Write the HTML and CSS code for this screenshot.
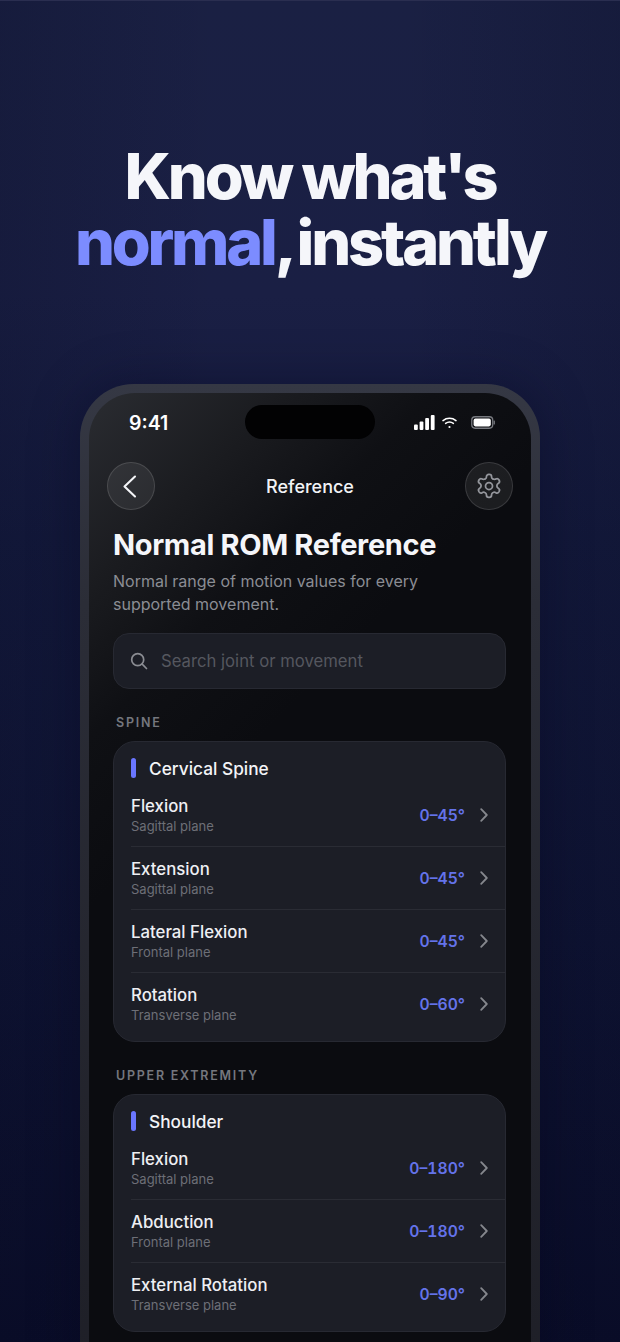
FILE: index.html
```html
<!DOCTYPE html>
<html>
<head>
  <title>Normal ROM Reference</title>
  <meta name="viewport" content="width=device-width, initial-scale=1">
  <link rel="stylesheet" href="styles.css">
</head>
<body>
  <h1 class="headline">Know what's<br><span class="accent">normal</span><span class="tight">, instantly</span></h1>

  <div class="phone">
    <div class="screen">
      <div class="status-bar">
        <span class="clock">9:41</span>
        <div class="island"></div>
        <div class="status-icons">
          <svg width="21" height="15" viewBox="0 0 21 15" fill="#fff">
            <rect x="0" y="9.500" width="3.800" height="5.500" rx="1"/>
            <rect x="5.600" y="6.500" width="3.800" height="8.500" rx="1"/>
            <rect x="11.200" y="3" width="3.800" height="12" rx="1"/>
            <rect x="16.800" y="0" width="3.800" height="15" rx="1"/>
          </svg>
          <svg class="wifi" width="15" height="12" viewBox="0 0 15 12" fill="none" stroke="#fff" stroke-width="1.500" stroke-linecap="round">
            <path d="M1 3.600C4.800.6 10.200.6 14 3.600"/>
            <path d="M3.600 6.400c2.300-1.700 5.500-1.700 7.800 0"/>
            <circle cx="7.500" cy="10" r="1.100" fill="#fff" stroke="none"/>
          </svg>
          <svg class="battery" width="24" height="13" viewBox="0 0 24 13">
            <rect x=".75" y=".75" width="21" height="11.500" rx="3.400" fill="none" stroke="#77797f" stroke-width="1.300"/>
            <rect x="2.600" y="2.600" width="17.200" height="7.800" rx="1.800" fill="#fff"/>
            <rect x="22.600" y="4.400" width="1.300" height="4.200" rx=".6" fill="#77797f"/>
          </svg>
        </div>
      </div>

      <div class="nav-bar">
        <button class="round-btn">
          <svg width="24" height="24" viewBox="0 0 24 24" fill="none" stroke="#f4f5f8" stroke-width="2.100" stroke-linecap="round" stroke-linejoin="round"><path d="M16 2.500 5.500 12.500 16 22.500"/></svg>
        </button>
        <span class="nav-title">Reference</span>
        <button class="round-btn">
          <svg width="28" height="28" viewBox="0 0 24 24" fill="none" stroke="#94969c" stroke-width="1.500" stroke-linecap="round" stroke-linejoin="round">
            <path d="M12.200 2h-.4a2 2 0 0 0-2 2v.2a2 2 0 0 1-1 1.700l-.4.200a2 2 0 0 1-2 0l-.2-.1a2 2 0 0 0-2.700.7l-.2.400a2 2 0 0 0 .7 2.700l.2.100a2 2 0 0 1 1 1.700v.5a2 2 0 0 1-1 1.700l-.2.100a2 2 0 0 0-.7 2.700l.2.400a2 2 0 0 0 2.700.7l.2-.1a2 2 0 0 1 2 0l.4.200a2 2 0 0 1 1 1.700v.2a2 2 0 0 0 2 2h.4a2 2 0 0 0 2-2v-.2a2 2 0 0 1 1-1.700l.4-.200a2 2 0 0 1 2 0l.2.100a2 2 0 0 0 2.700-.7l.2-.400a2 2 0 0 0-.7-2.700l-.2-.100a2 2 0 0 1-1-1.700v-.5a2 2 0 0 1 1-1.700l.2-.100a2 2 0 0 0 .7-2.700l-.2-.400a2 2 0 0 0-2.700-.7l-.2.100a2 2 0 0 1-2 0l-.4-.200a2 2 0 0 1-1-1.700V4a2 2 0 0 0-2-2z"/>
            <circle cx="12" cy="12" r="3"/>
          </svg>
        </button>
      </div>

      <div class="content">
        <h2 class="page-title">Normal ROM Reference</h2>
        <p class="page-sub">Normal range of motion values for every supported movement.</p>

        <div class="search">
          <svg width="20" height="20" viewBox="0 0 20 20" fill="none" stroke="#8b8d93" stroke-width="1.700" stroke-linecap="round"><circle cx="8.700" cy="8.700" r="6"/><path d="m13.200 13.200 4.300 4.300"/></svg>
          <span>Search joint or movement</span>
        </div>

        <div class="section-label">SPINE</div>
        <div class="card">
          <div class="card-head"><span class="bar"></span>Cervical Spine</div>
          <div class="row">
            <div class="row-text"><div class="row-name">Flexion</div><div class="row-plane">Sagittal plane</div></div>
            <span class="row-value">0–45°</span>
            <svg class="chev" width="10" height="14" viewBox="0 0 10 14" fill="none" stroke="#85878d" stroke-width="1.800" stroke-linecap="round" stroke-linejoin="round"><path d="m2.200 1.200 5.600 5.800-5.600 5.800"/></svg>
          </div>
          <div class="row">
            <div class="row-text"><div class="row-name">Extension</div><div class="row-plane">Sagittal plane</div></div>
            <span class="row-value">0–45°</span>
            <svg class="chev" width="10" height="14" viewBox="0 0 10 14" fill="none" stroke="#85878d" stroke-width="1.800" stroke-linecap="round" stroke-linejoin="round"><path d="m2.200 1.200 5.600 5.800-5.600 5.800"/></svg>
          </div>
          <div class="row">
            <div class="row-text"><div class="row-name">Lateral Flexion</div><div class="row-plane">Frontal plane</div></div>
            <span class="row-value">0–45°</span>
            <svg class="chev" width="10" height="14" viewBox="0 0 10 14" fill="none" stroke="#85878d" stroke-width="1.800" stroke-linecap="round" stroke-linejoin="round"><path d="m2.200 1.200 5.600 5.800-5.600 5.800"/></svg>
          </div>
          <div class="row">
            <div class="row-text"><div class="row-name">Rotation</div><div class="row-plane">Transverse plane</div></div>
            <span class="row-value">0–60°</span>
            <svg class="chev" width="10" height="14" viewBox="0 0 10 14" fill="none" stroke="#85878d" stroke-width="1.800" stroke-linecap="round" stroke-linejoin="round"><path d="m2.200 1.200 5.600 5.800-5.600 5.800"/></svg>
          </div>
        </div>

        <div class="section-label">UPPER EXTREMITY</div>
        <div class="card">
          <div class="card-head"><span class="bar"></span>Shoulder</div>
          <div class="row">
            <div class="row-text"><div class="row-name">Flexion</div><div class="row-plane">Sagittal plane</div></div>
            <span class="row-value">0–180°</span>
            <svg class="chev" width="10" height="14" viewBox="0 0 10 14" fill="none" stroke="#85878d" stroke-width="1.800" stroke-linecap="round" stroke-linejoin="round"><path d="m2.200 1.200 5.600 5.800-5.600 5.800"/></svg>
          </div>
          <div class="row">
            <div class="row-text"><div class="row-name">Abduction</div><div class="row-plane">Frontal plane</div></div>
            <span class="row-value">0–180°</span>
            <svg class="chev" width="10" height="14" viewBox="0 0 10 14" fill="none" stroke="#85878d" stroke-width="1.800" stroke-linecap="round" stroke-linejoin="round"><path d="m2.200 1.200 5.600 5.800-5.600 5.800"/></svg>
          </div>
          <div class="row">
            <div class="row-text"><div class="row-name">External Rotation</div><div class="row-plane">Transverse plane</div></div>
            <span class="row-value">0–90°</span>
            <svg class="chev" width="10" height="14" viewBox="0 0 10 14" fill="none" stroke="#85878d" stroke-width="1.800" stroke-linecap="round" stroke-linejoin="round"><path d="m2.200 1.200 5.600 5.800-5.600 5.800"/></svg>
          </div>
        </div>
      </div>
    </div>
  </div>
</body>
</html>
```

FILE: styles.css
```css
* {
  box-sizing: border-box;
}
html, body {
  margin: 0;
  height: 1342px;
  overflow: hidden;
}
body {
  font-family: Inter, "Noto Sans", sans-serif;
  color: #f5f6fa;
  background:
    linear-gradient(90deg, rgba(5, 8, 30, 0.18), transparent 35%, transparent 65%, rgba(5, 8, 30, 0.18)),
    linear-gradient(180deg, #1a2043 0%, #1a1f44 22%, #141a3d 40%, #0f1434 70%, #0a0d29 100%);
  border-top: 1px solid #2a2e50;
  padding-top: 142px;
}
.headline {
  margin: 0;
  text-align: center;
  font-size: 63px;
  line-height: 66px;
  font-weight: 800;
  letter-spacing: -3.200px;
  color: #f5f6fa;
}
.accent {
  color: #7c8cff;
}
.tight {
  word-spacing: -5px;
}
.phone {
  width: 460px;
  margin: 109px auto 0;
  padding: 9px 9px 0;
  height: 1000px;
  border-radius: 54px 54px 0 0;
  background: linear-gradient(180deg, #353844 0%, #2b2d37 22%, #1e1f27 100%);
  box-shadow: 0 0 50px rgba(5, 7, 25, 0.35);
}
.screen {
  height: 100%;
  border-radius: 46px 46px 0 0;
  background: linear-gradient(135deg, #2a2c31 0%, #1a1b1f 14%, #0f1014 24%, #0b0c10 36%, #0b0c10 100%);
  padding: 0 25px 0 24px;
}
.status-bar {
  height: 59px;
  display: flex;
  align-items: center;
  justify-content: space-between;
  padding: 0 11px 0 16px;
  position: relative;
}
.clock {
  font-size: 19.500px;
  font-weight: 600;
  color: #fff;
}
.island {
  position: absolute;
  left: 132px;
  top: 12px;
  width: 130px;
  height: 34px;
  border-radius: 17px;
  background: #020203;
}
.status-icons {
  display: flex;
  align-items: center;
  gap: 7px;
}
.battery {
  margin-left: 7px;
}
.nav-bar {
  display: flex;
  align-items: center;
  justify-content: space-between;
  margin: 10px -7px 0 -6px;
  height: 48px;
}
.round-btn {
  width: 48px;
  height: 48px;
  padding: 0;
  display: flex;
  align-items: center;
  justify-content: center;
  border-radius: 50%;
  border: 1px solid rgba(255, 255, 255, 0.13);
  background: rgba(255, 255, 255, 0.07);
}
.nav-title {
  font-size: 18px;
  font-weight: 500;
  color: #f2f3f6;
}
.content {
  padding-top: 17px;
}
.page-title {
  margin: 0;
  font-size: 29px;
  line-height: 36px;
  font-weight: 700;
  letter-spacing: -0.35px;
  color: #f5f6fa;
}
.page-sub {
  margin: 7px 0 0;
  max-width: 320px;
  font-size: 16px;
  line-height: 23px;
  color: #8b8d94;
}
.search {
  margin-top: 17px;
  height: 56px;
  display: flex;
  align-items: center;
  gap: 12px;
  padding: 0 15px;
  border: 1px solid #272932;
  border-radius: 16px;
  background: #1c1e26;
  font-size: 16.700px;
  color: #55575f;
}
.section-label {
  margin: 26px 0 10px 3px;
  height: 16px;
  line-height: 16px;
  font-size: 12.500px;
  font-weight: 600;
  letter-spacing: 1.750px;
  color: #75777e;
}
.card {
  border: 1px solid #272932;
  border-radius: 22px;
  background: #1c1e26;
  padding-left: 17px;
  padding-bottom: 5px;
  margin-bottom: 26px;
}
.card-head {
  display: flex;
  align-items: center;
  gap: 13px;
  height: 42px;
  padding-top: 10px;
  font-size: 17.300px;
  font-weight: 500;
  color: #f3f4f7;
}
.bar {
  width: 5px;
  height: 20px;
  border-radius: 3px;
  background: #6a76ff;
}
.row {
  display: flex;
  align-items: center;
  height: 63px;
  padding-right: 16px;
  border-bottom: 1px solid #2a2c34;
}
.row:last-child {
  border-bottom: 1px solid transparent;
}
.row-text {
  flex: 1;
}
.row-name {
  font-size: 16.800px;
  line-height: 22px;
  font-weight: 500;
  color: #eeeff3;
}
.row-plane {
  font-size: 13px;
  line-height: 18px;
  color: #6d6f77;
}
.row-value {
  font-size: 15.700px;
  font-weight: 600;
  font-variant-numeric: tabular-nums;
  color: #6473ea;
}
.chev {
  margin-left: 14px;
}
```
